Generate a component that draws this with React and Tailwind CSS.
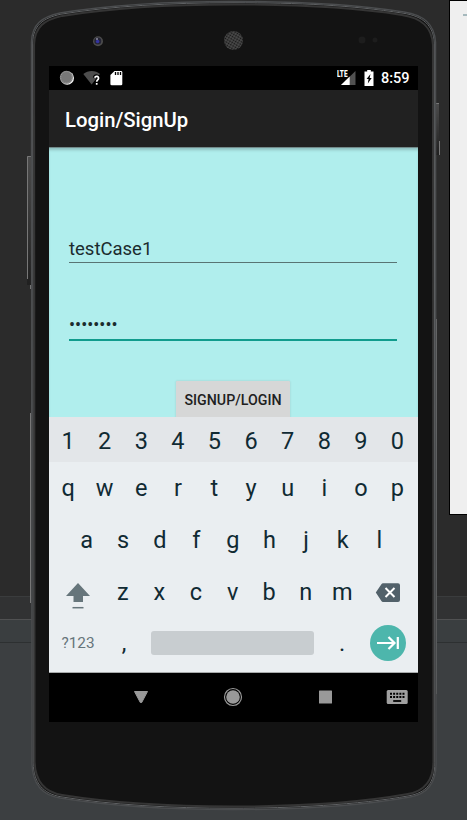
import React from "react";

const numbers = ["1", "2", "3", "4", "5", "6", "7", "8", "9", "0"];
const topRow = ["q", "w", "e", "r", "t", "y", "u", "i", "o", "p"];
const homeRow = ["a", "s", "d", "f", "g", "h", "j", "k", "l"];
const bottomRow = ["z", "x", "c", "v", "b", "n", "m"];

const outline =
  "M31.5 42 C32 24 42 17 60 13 C110 5 170 1.5 233 1.5 C300 1.5 352 4 404 12 C424 15 434.5 24 435.5 42 L436 764 C436 784 427 794 410 797 C360 806 290 809.5 233 809.5 C170 809.5 110 806 60 798 C42 795 32.500 784 32 764 Z";

function Key({ children }) {
  return <span className="flex w-[36.6px] shrink-0 items-center justify-center">{children}</span>;
}

function Backdrop() {
  return (
    <div className="absolute inset-0 flex flex-col bg-[#3c3f41]">
      <div className="h-[596px] bg-[#2b2b2b]" />
      <div className="h-[23px] border-t border-[#3a3c3d] bg-[#313233]" />
      <div className="h-6 border-y border-t-[#505152] border-b-[#2d3031] bg-[#3a3e40]" />
    </div>
  );
}

function SidePanel() {
  return (
    <div className="absolute top-0 right-0 flex h-[515px] w-[18px] justify-end border-y border-l border-black bg-[#efefef] pt-[13px]">
      <div className="h-[2px] w-1 bg-[#a6b9bd]" />
    </div>
  );
}

function Device() {
  return (
    <svg className="absolute inset-0" width="467" height="820" viewBox="0 0 467 820">
      <defs>
        <pattern id="mesh" width="2.6" height="2.6" patternUnits="userSpaceOnUse" patternTransform="rotate(30)">
          <rect width="2.6" height="2.6" fill="#4c4c4c" />
          <circle cx="1.3" cy="1.3" r=".9" fill="#141414" />
        </pattern>
        <linearGradient id="side" x1="0" y1="0" x2="0" y2="1">
          <stop offset="0" stopColor="#4b4b4b" />
          <stop offset=".5" stopColor="#363636" />
          <stop offset="1" stopColor="#202020" />
        </linearGradient>
      </defs>
      <rect x="27" y="156" width="6" height="129" fill="url(#side)" />
      <path d="M31 156.500H27.500V279M30.500 285V289M30.500 413V603" fill="none" stroke="#777" />
      <rect x="435" y="103" width="4" height="52" fill="url(#side)" />
      <path d="M436 103.500H439M439.500 141V155M436.500 319V694" fill="none" stroke="#777" />
      <path d={outline} fill="#131313" />
      <path d={outline} fill="none" stroke="#353535" strokeWidth="2" transform="translate(3 3) scale(.9872 .9926)" />
      <path d={outline} fill="none" stroke="#626466" strokeWidth="1" transform="translate(1.300 1.200) scale(.9944 .997)" />
      <path d={outline} fill="none" stroke="#4b4d4f" strokeWidth="1.500" />
      <circle cx="98" cy="41.300" r="5" fill="#4c4c4c" />
      <circle cx="97.800" cy="41" r="3.500" fill="#242436" />
      <circle cx="97.600" cy="41.500" r="1.800" fill="#3434a0" />
      <circle cx="97" cy="39" r="1" fill="#8c8ca0" />
      <circle cx="233.500" cy="40.500" r="9.500" fill="url(#mesh)" />
      <circle cx="362" cy="40" r="3.500" fill="#1d1d1d" />
      <circle cx="375" cy="40" r="2.500" fill="#1d1d1d" />
    </svg>
  );
}

function StatusBar() {
  return (
    <div className="flex h-6 shrink-0 items-center bg-black">
      <svg width="80" height="24" viewBox="0 0 80 24">
        <circle cx="18.200" cy="12" r="6.800" fill="#f4f4f4" />
        <circle cx="17.400" cy="11.300" r="6.500" fill="#777" />
        <circle cx="17.400" cy="11.300" r="5.700" fill="none" stroke="#aaa" strokeWidth="1" strokeDasharray="1 1.200" />
        <path d="M34.300 8C39 4 46.500 4 51 8L42.600 18.500Z" fill="#4d4d4d" />
        <path d="M45.800 11.800C46.300 9.500 50 10 49.500 12.500C49.200 14 47.700 14 47.700 16" fill="none" stroke="#000" strokeWidth="4" />
        <path d="M45.800 11.800C46.300 9.500 50 10 49.500 12.500C49.200 14 47.700 14 47.700 15.800M47.700 17V18.800" fill="none" stroke="#fff" strokeWidth="1.700" />
        <path d="M65.500 5H72Q73.300 5 73.300 6.300V18Q73.300 19.300 72 19.300H62.800Q61.400 19.300 61.400 18V9Z" fill="#fff" />
        <path d="M66.500 6V9M69 6V9M71.500 6V9" stroke="#000" strokeWidth="1.300" />
      </svg>
      <div className="ml-auto flex items-center">
        <div className="relative h-6 w-[22px]">
          <svg className="absolute inset-0" width="22" height="24" viewBox="0 0 22 24">
            <path d="M4 19L18.500 5V19Z" fill="#515151" />
            <path d="M4 19L12.700 10.500V19Z" fill="#fff" />
          </svg>
          <span className="absolute top-1 left-0 h-2 origin-left scale-x-[.68] bg-black text-[9.500px] leading-[8px] font-black">LTE</span>
        </div>
        <svg className="ml-[5px]" width="10" height="24" viewBox="0 0 10 24">
          <path d="M3.200 4H6.800V5.500H9.500V20H.500V5.500H3.200Z" fill="#fff" />
          <path d="M6.500 8L2.600 13H4.600L3.800 17.500L7.700 12H5.600Z" fill="#000" />
        </svg>
        <span className="mr-[8.500px] ml-[7px] pt-[2px] text-[14.500px] leading-6 font-medium">8:59</span>
      </div>
    </div>
  );
}

function Keyboard() {
  return (
    <div className="flex h-[256px] shrink-0 flex-col border-b border-[#a7aaab] bg-[#eaeef1] text-[23.500px] leading-none text-[#102a33]">
      <div className="flex h-[45px] shrink-0 bg-[#e3e6e9] pt-[5px] pl-[.8px]">
        {numbers.map((k) => <Key key={k}>{k}</Key>)}
      </div>
      <div className="flex h-[52px] shrink-0 pt-[2px] pl-[.8px]">
        {topRow.map((k) => <Key key={k}>{k}</Key>)}
      </div>
      <div className="flex h-[52px] shrink-0 pt-[2px] pl-[19.300px]">
        {homeRow.map((k) => <Key key={k}>{k}</Key>)}
      </div>
      <div className="flex h-[51px] shrink-0">
        <div className="w-[55.500px] shrink-0 pl-[17px]">
          <svg width="24" height="51" viewBox="0 0 24 51">
            <path d="M12 17L24 30H17V36H7.500V30H0Z" fill="#66757b" />
            <path d="M6.500 41.700H17.500" stroke="#66757b" strokeWidth="1.500" />
          </svg>
        </div>
        <div className="flex pt-[2px]">
          {bottomRow.map((k) => <Key key={k}>{k}</Key>)}
        </div>
        <svg className="ml-[14.500px]" width="26" height="51" viewBox="0 0 26 51">
          <path d="M8 17.200H23Q25 17.200 25 19.200V34Q25 36 23 36H8Q7 36 6.400 35L.800 26.600L6.400 18.200Q7 17.200 8 17.200Z" fill="#52616a" />
          <path d="M10.500 22L19.500 31M19.500 22L10.500 31" stroke="#fff" strokeWidth="2" />
        </svg>
      </div>
      <div className="flex h-[55px] shrink-0 items-center pb-[3px]">
        <span className="w-[58px] pt-[2px] text-center text-[15.300px] text-[#66757b]">?123</span>
        <span className="w-[34px] pt-[2px] text-center">,</span>
        <span className="ml-[10px] h-6 w-[163px] rounded-[3px] bg-[#c8cdd0]" />
        <span className="ml-[10px] w-[36px] pt-[2px] text-center">.</span>
        <svg className="ml-[10px]" width="36" height="36" viewBox="0 0 36 36">
          <circle cx="18" cy="18" r="18" fill="#4db6ac" />
          <path d="M7 18H24.500M18.500 12L24.500 18L18.500 24M27.800 12V24" fill="none" stroke="#fff" strokeWidth="2.200" />
        </svg>
      </div>
    </div>
  );
}

function NavBar() {
  return (
    <div className="flex h-[49px] shrink-0 bg-black">
      <svg width="369" height="49" viewBox="0 1 369 49">
        <path d="M85.500 19.500H98.500L92.700 30.500H91.300Z" fill="#999" stroke="#999" strokeLinejoin="round" />
        <circle cx="184" cy="25" r="8.500" fill="none" stroke="#999" strokeWidth="1.200" />
        <circle cx="184" cy="25" r="6.800" fill="#999" />
        <rect x="270" y="18.500" width="13" height="13" rx=".5" fill="#999" />
        <rect x="337.700" y="18" width="21" height="14" rx="1.500" fill="#a0a0a0" />
        <path d="M341 21.800H355.500M341 25H355.500" stroke="#000" strokeWidth="1.900" strokeDasharray="2 1.120" />
        <path d="M344.200 29H352.200" stroke="#000" strokeWidth="1.800" />
      </svg>
    </div>
  );
}

export default function App() {
  return (
    <div className="relative h-[820px] w-[467px] overflow-hidden font-['Roboto',sans-serif]">
      <Backdrop />
      <SidePanel />
      <Device />
      <div className="relative pt-[66px] pl-[49px]">
        <main className="flex h-[656px] w-[369px] flex-col overflow-hidden text-white">
          <StatusBar />
          <header className="flex h-[57px] shrink-0 items-center bg-[#212121] pl-4 text-[20.300px] font-medium">
            <h1 className="pt-[4px]">Login/SignUp</h1>
          </header>
          <section className="flex h-[270px] shrink-0 flex-col items-start overflow-hidden border-t border-[#728b8b] bg-[#b0eeed] pl-5 text-[#1b2b2d] shadow-[inset_0_3px_3px_-1px_#8dbfbe]">
            <div className="mt-[88px] h-[27px] w-[328px] shrink-0 border-b border-[#587474] text-[18.500px] leading-[26px]">testCase1</div>
            <div className="mt-[49px] h-[29px] w-[328px] shrink-0 border-b-2 border-[#109c8d] text-[18px] leading-[26px]">••••••••</div>
            <button className="mt-[40px] ml-[107px] h-12 w-[114px] shrink-0 rounded-[1px] bg-[#d6d7d7] pb-[9px] text-[14.200px] font-medium text-[#202020] shadow-[0_0_2px_#9bc4c4]">SIGNUP/LOGIN</button>
          </section>
          <Keyboard />
          <NavBar />
        </main>
      </div>
    </div>
  );
}
